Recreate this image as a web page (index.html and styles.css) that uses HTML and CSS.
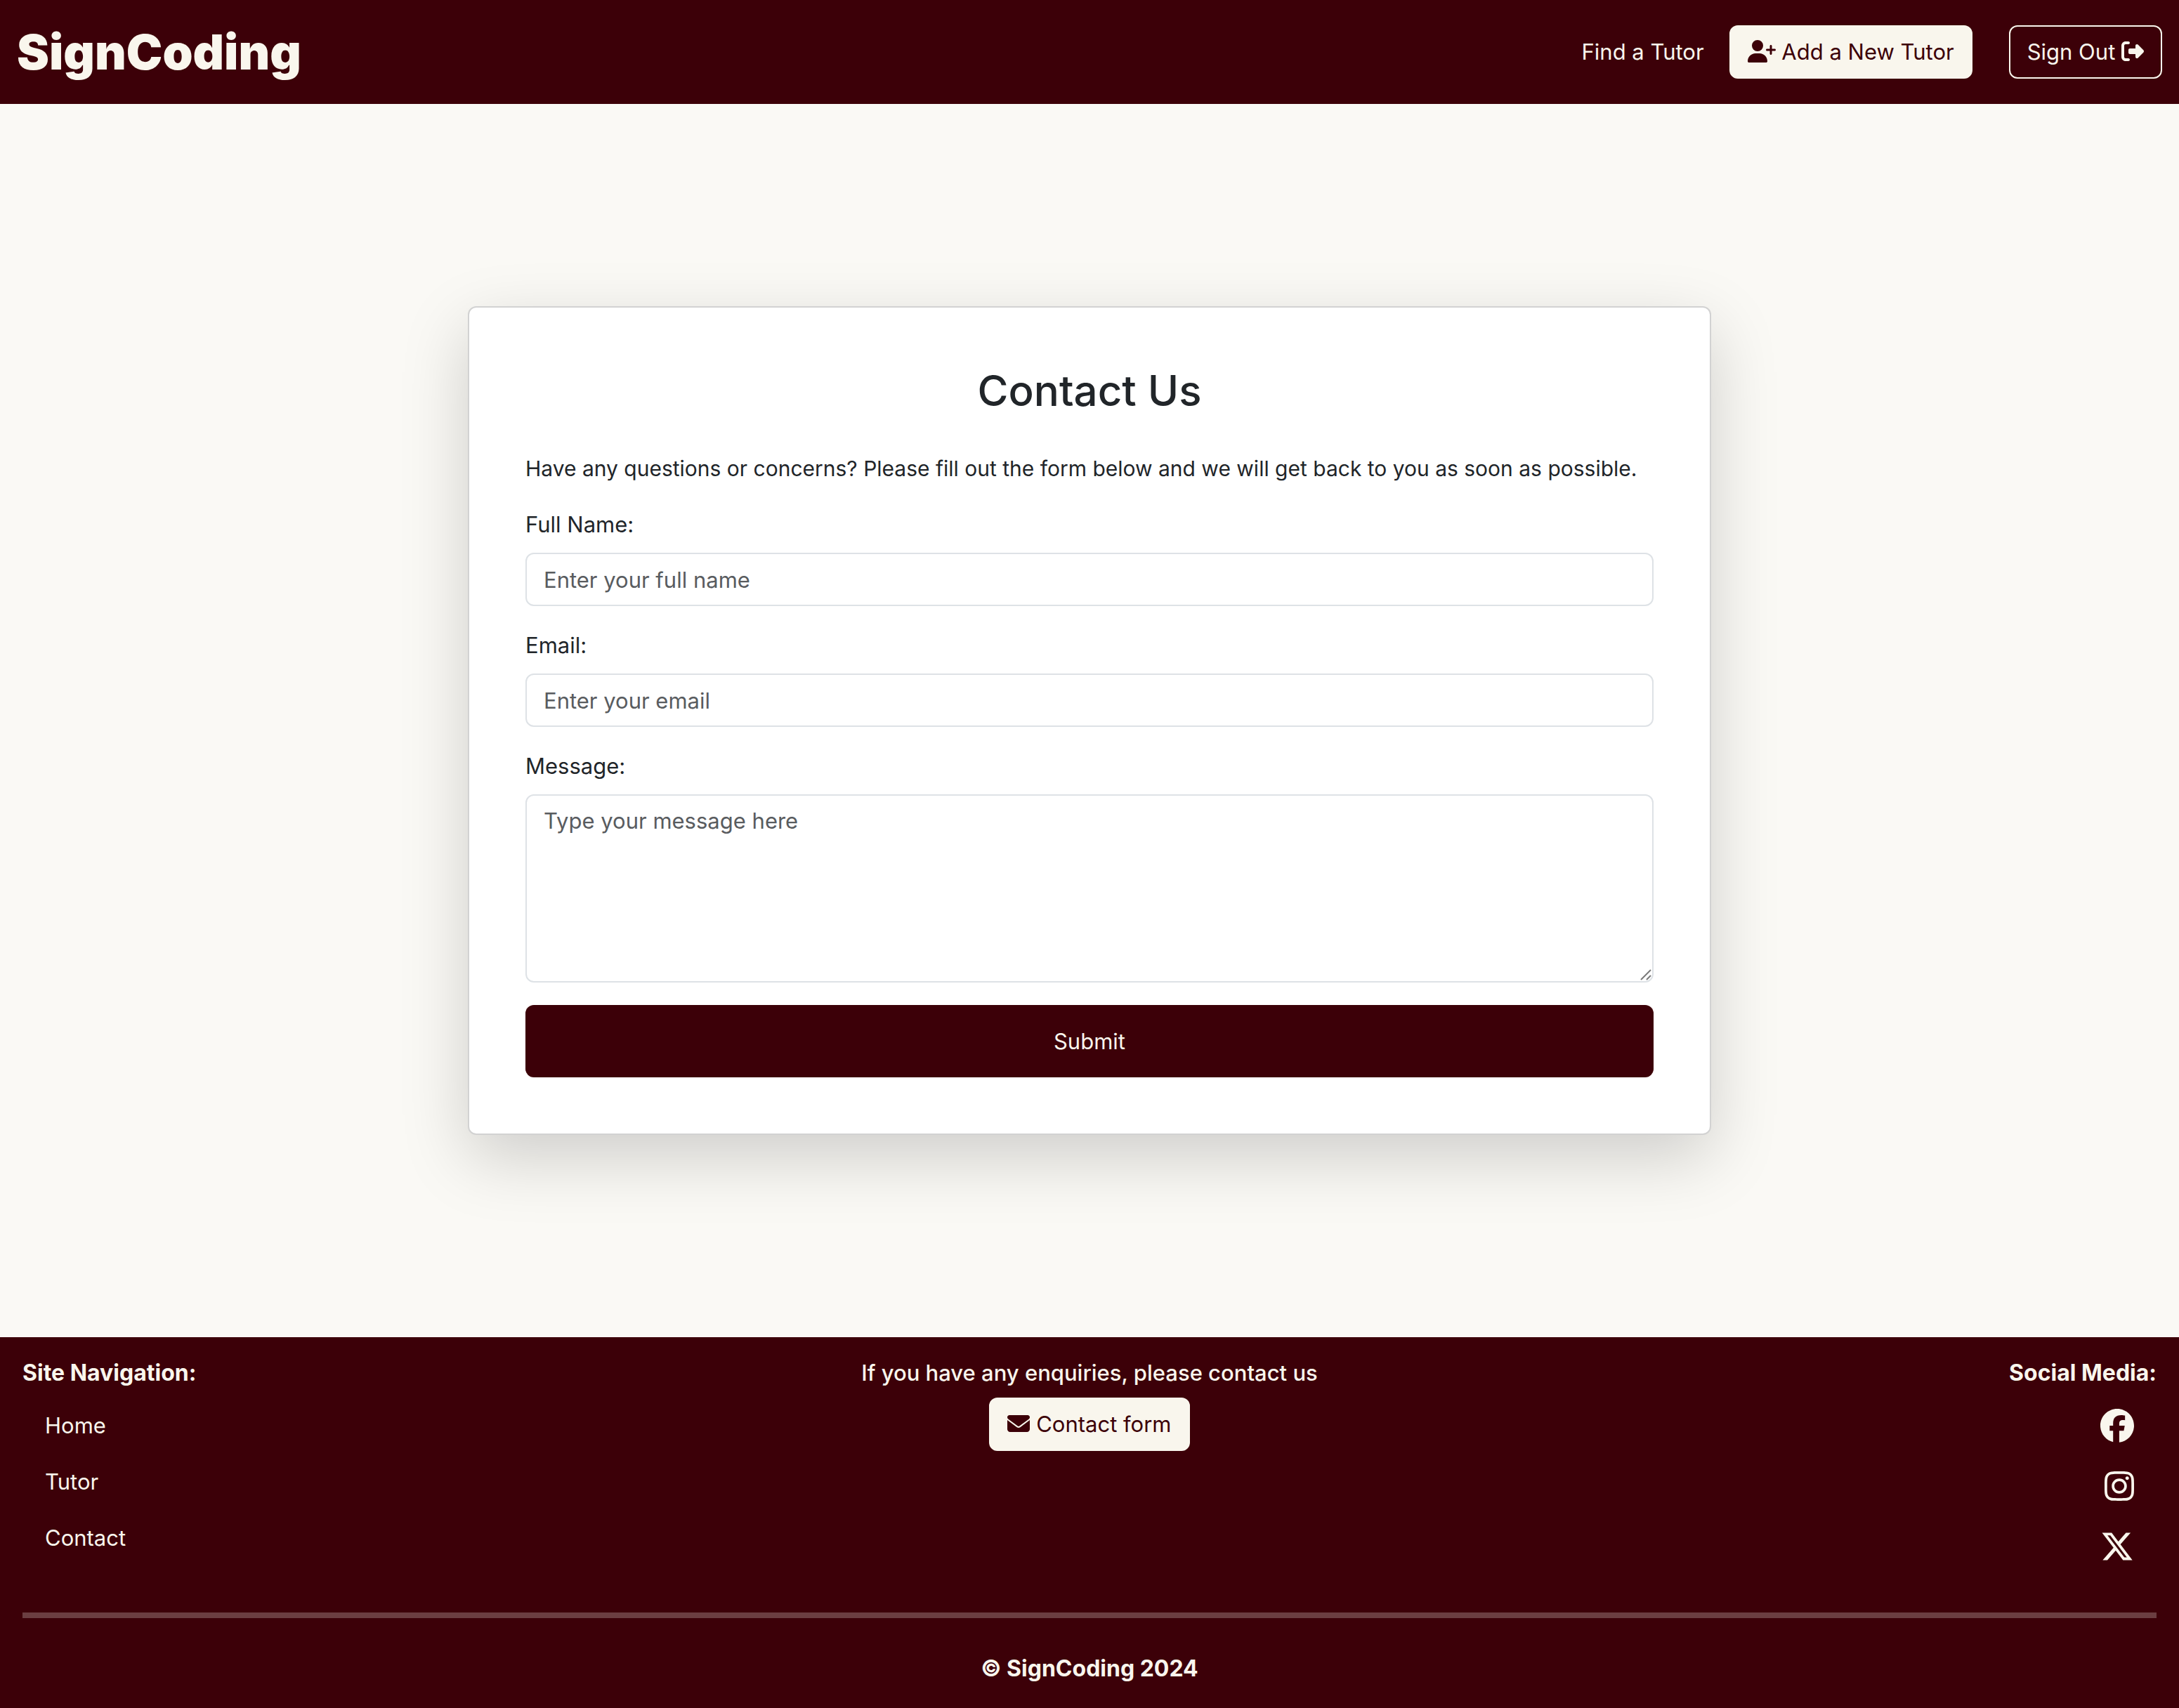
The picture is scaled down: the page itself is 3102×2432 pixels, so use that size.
FILE: index.html
```html
<!DOCTYPE html>
<html lang="en">
<head>
  <meta charset="utf-8">
  <meta name="viewport" content="width=device-width, initial-scale=1">
  <title>SignCoding - Contact Us</title>
  <link rel="stylesheet" href="styles.css">
</head>
<body>
  <header class="navbar">
    <a class="brand" href="#">SignCoding</a>
    <nav class="nav-actions" aria-label="Main">
      <a class="nav-link" href="#">Find a Tutor</a>
      <a class="btn btn-light" href="#"><svg class="icon icon-wide" viewBox="0 0 640 512" aria-hidden="true"><path d="M96 128a128 128 0 1 1 256 0A128 128 0 1 1 96 128zM0 482.3C0 383.8 79.8 304 178.3 304h91.4C368.2 304 448 383.8 448 482.3c0 16.4-13.3 29.7-29.7 29.7H29.7C13.3 512 0 498.7 0 482.3zM504 312V248H440c-13.3 0-24-10.7-24-24s10.7-24 24-24h64V136c0-13.3 10.7-24 24-24s24 10.7 24 24v64h64c13.3 0 24 10.7 24 24s-10.7 24-24 24H552v64c0 13.3-10.7 24-24 24s-24-10.7-24-24z"/></svg> Add a New Tutor</a>
      <button class="btn btn-outline" type="button">Sign Out <svg class="icon" viewBox="0 0 512 512" aria-hidden="true"><path d="M377.9 105.9L500.7 228.7c7.2 7.2 11.3 17.1 11.3 27.3s-4.1 20.1-11.3 27.3L377.9 406.1c-6.4 6.4-15 9.9-24 9.9c-18.7 0-33.9-15.2-33.9-33.9l0-62.1-128 0c-17.7 0-32-14.3-32-32l0-64c0-17.7 14.3-32 32-32l128 0 0-62.1c0-18.7 15.2-33.9 33.9-33.9c9 0 17.6 3.6 24 9.9zM160 96L96 96c-17.7 0-32 14.3-32 32l0 256c0 17.7 14.3 32 32 32l64 0c17.7 0 32 14.3 32 32s-14.3 32-32 32l-64 0c-53 0-96-43-96-96L0 128C0 75 43 32 96 32l64 0c17.7 0 32 14.3 32 32s-14.3 32-32 32z"/></svg></button>
    </nav>
  </header>

  <main class="page">
    <section class="card">
      <h1 class="card-title">Contact Us</h1>
      <p class="intro">Have any questions or concerns? Please fill out the form below and we will get back to you as soon as possible.</p>
      <form class="form" action="#">
        <div class="field">
          <label for="name">Full Name:</label>
          <input class="control" id="name" type="text" placeholder="Enter your full name">
        </div>
        <div class="field">
          <label for="email">Email:</label>
          <input class="control" id="email" type="email" placeholder="Enter your email">
        </div>
        <div class="field">
          <label for="message">Message:</label>
          <div class="message-box">
            <textarea class="control message" id="message" placeholder="Type your message here"></textarea>
            <svg class="grip" viewBox="0 0 16 16" aria-hidden="true"><path d="M1 15L15 1M9 15l6-6"/></svg>
          </div>
        </div>
        <button class="submit" type="submit">Submit</button>
      </form>
    </section>
  </main>

  <footer class="footer">
    <div class="footer-columns">
      <nav class="footer-nav" aria-label="Site">
        <h2 class="footer-title">Site Navigation:</h2>
        <ul class="link-list">
          <li><a href="#">Home</a></li>
          <li><a href="#">Tutor</a></li>
          <li><a href="#">Contact</a></li>
        </ul>
      </nav>
      <div class="footer-contact">
        <p class="footer-title footer-note">If you have any enquiries, please contact us</p>
        <a class="btn btn-light" href="#"><svg class="icon" viewBox="0 0 512 512" aria-hidden="true"><path d="M48 64C21.5 64 0 85.5 0 112c0 15.1 7.1 29.3 19.2 38.4L236.8 313.6c11.4 8.5 27 8.5 38.4 0L492.8 150.4c12.1-9.1 19.2-23.3 19.2-38.4c0-26.5-21.5-48-48-48H48zM0 176V384c0 35.3 28.7 64 64 64H448c35.3 0 64-28.7 64-64V176L294.4 339.2c-22.8 17.1-54 17.1-76.8 0L0 176z"/></svg> Contact form</a>
      </div>
      <div class="footer-social">
        <h2 class="footer-title">Social Media:</h2>
        <ul class="social-list">
          <li><a href="#" aria-label="Facebook"><svg class="social" viewBox="0 0 512 512"><path d="M512 256C512 114.6 397.4 0 256 0S0 114.6 0 256C0 376 82.7 476.8 194.2 504.5V334.2H141.4V256h52.8V222.3c0-87.1 39.4-127.5 125-127.5c16.2 0 44.2 3.2 55.7 6.4V172c-6-.6-16.5-1-29.6-1c-42 0-58.2 15.9-58.2 57.2V256h83.6l-14.4 78.2H287V510.1C413.8 494.8 512 386.9 512 256h0z"/></svg></a></li>
          <li><a href="#" aria-label="Instagram"><svg class="social" viewBox="0 0 448 512"><path d="M224.1 141c-63.6 0-114.9 51.3-114.9 114.9s51.3 114.9 114.9 114.9S339 319.5 339 255.9 287.7 141 224.1 141zm0 189.6c-41.1 0-74.7-33.5-74.7-74.7s33.5-74.7 74.7-74.7 74.7 33.5 74.7 74.7-33.6 74.7-74.7 74.7zm146.4-194.3c0 14.9-12 26.8-26.8 26.8-14.9 0-26.8-12-26.8-26.8s12-26.8 26.8-26.8 26.8 12 26.8 26.8zm76.1 27.2c-1.7-35.9-9.9-67.7-36.2-93.9-26.2-26.2-58-34.4-93.9-36.2-37-2.1-147.9-2.1-184.9 0-35.8 1.7-67.6 9.9-93.9 36.1s-34.4 58-36.2 93.9c-2.1 37-2.1 147.9 0 184.9 1.7 35.9 9.9 67.7 36.2 93.9s58 34.4 93.9 36.2c37 2.1 147.9 2.1 184.9 0 35.9-1.7 67.7-9.9 93.9-36.2 26.2-26.2 34.4-58 36.2-93.9 2.1-37 2.1-147.8 0-184.8zM398.8 388c-7.8 19.6-22.9 34.7-42.6 42.6-29.5 11.7-99.5 9-132.1 9s-102.7 2.6-132.1-9c-19.6-7.8-34.7-22.9-42.6-42.6-11.7-29.5-9-99.5-9-132.1s-2.6-102.7 9-132.1c7.8-19.6 22.9-34.7 42.6-42.6 29.5-11.7 99.5-9 132.1-9s102.7-2.6 132.1 9c19.6 7.8 34.7 22.9 42.6 42.6 11.7 29.5 9 99.5 9 132.1s2.7 102.7-9 132.1z"/></svg></a></li>
          <li><a href="#" aria-label="X"><svg class="social" viewBox="0 0 512 512"><path d="M389.2 48h70.6L305.6 224.2 487 464H345L233.7 318.6 106.5 464H35.8L200.7 275.5 26.8 48H172.4L272.9 180.9 389.2 48zM364.4 421.8h39.1L151.1 88h-42L364.4 421.8z"/></svg></a></li>
        </ul>
      </div>
    </div>
    <hr class="divider">
    <p class="copyright">© SignCoding 2024</p>
  </footer>
</body>
</html>
```
FILE: styles.css
```css
:root {
  --maroon: #3c0008;
  --cream: #f9f6ed;
  --paper: #faf9f5;
  --ink: #212529;
}

*, *::before, *::after { box-sizing: border-box; }

body {
  margin: 0;
  min-height: 100vh;
  display: flex;
  flex-direction: column;
  background: var(--paper);
  color: var(--ink);
  font-family: Inter, "Liberation Sans", sans-serif;
  font-size: 31px;
  line-height: 48px;
}

h1, h2, p, ul { margin: 0; padding: 0; }
ul { list-style: none; }
a { color: inherit; text-decoration: none; }
input, textarea, button { font: inherit; }
svg { fill: currentColor; }

/* Header */
.navbar {
  display: flex;
  align-items: center;
  justify-content: space-between;
  height: 148px;
  padding: 0 24px;
  background: var(--maroon);
  color: var(--cream);
}

.brand {
  font-size: 69px;
  font-weight: 900;
  line-height: 96px;
}

.nav-actions { display: flex; align-items: center; }
.nav-link { margin-right: 36px; }

.btn {
  display: inline-block;
  padding: 12px 24px;
  border: 2px solid var(--cream);
  border-radius: 12px;
  cursor: pointer;
}
.btn-light { background: var(--cream); color: var(--maroon); }
.btn-outline { margin-left: 52px; background: transparent; color: var(--cream); }

.icon { width: 32px; height: 32px; vertical-align: -4px; }
.icon-wide { width: 40px; }

/* Contact form */
.page {
  flex: 1;
  display: flex;
  align-items: center;
  justify-content: center;
  padding: 96px 24px;
}

.card {
  width: 100%;
  max-width: 1770px;
  padding: 80px;
  background: #fff;
  border: 2px solid rgba(0, 0, 0, 0.175);
  border-radius: 12px;
  box-shadow: 0 32px 96px rgba(0, 0, 0, 0.175);
}

.card-title {
  margin-bottom: 48px;
  font-size: 60px;
  font-weight: 500;
  line-height: 77px;
  text-align: center;
}

.intro { margin-bottom: 32px; font-size: 30px; }

.form { display: flex; flex-direction: column; gap: 32px; }
.field { display: flex; flex-direction: column; gap: 16px; }

.control {
  display: block;
  width: 100%;
  height: 76px;
  padding: 12px 24px;
  background: #fff;
  border: 2px solid #dee2e6;
  border-radius: 12px;
  color: var(--ink);
}
.control::placeholder { color: #595c5f; opacity: 1; }

.message-box { position: relative; }
.message { height: 268px; resize: none; }
.grip {
  position: absolute;
  right: 3px;
  bottom: 3px;
  width: 16px;
  height: 16px;
  fill: none;
  stroke: #7a7a7a;
  stroke-width: 2;
  pointer-events: none;
}

.submit {
  height: 103px;
  border: 0;
  border-radius: 12px;
  background: var(--maroon);
  color: var(--cream);
  cursor: pointer;
}

/* Footer */
.footer { padding: 32px; background: var(--maroon); color: var(--cream); }
.footer-columns { display: grid; grid-template-columns: 1fr auto 1fr; }

.footer-title {
  margin-bottom: 16px;
  font-size: 32px;
  font-weight: 700;
  line-height: 38px;
}
.footer-note { font-size: 31px; font-weight: 500; }
.footer-contact { text-align: center; }
.footer-social { text-align: right; }

.link-list a { display: inline-block; padding: 16px 32px; }
.link-list li { height: 80px; }

.social-list li { height: 86px; }
.social-list a { display: inline-block; padding: 16px 32px; }
.social { display: block; height: 48px; }

.divider {
  height: 8px;
  margin: 48px 0;
  border: 0;
  background: var(--cream);
  opacity: 0.25;
}

.copyright { font-size: 32px; font-weight: 700; text-align: center; }
```
